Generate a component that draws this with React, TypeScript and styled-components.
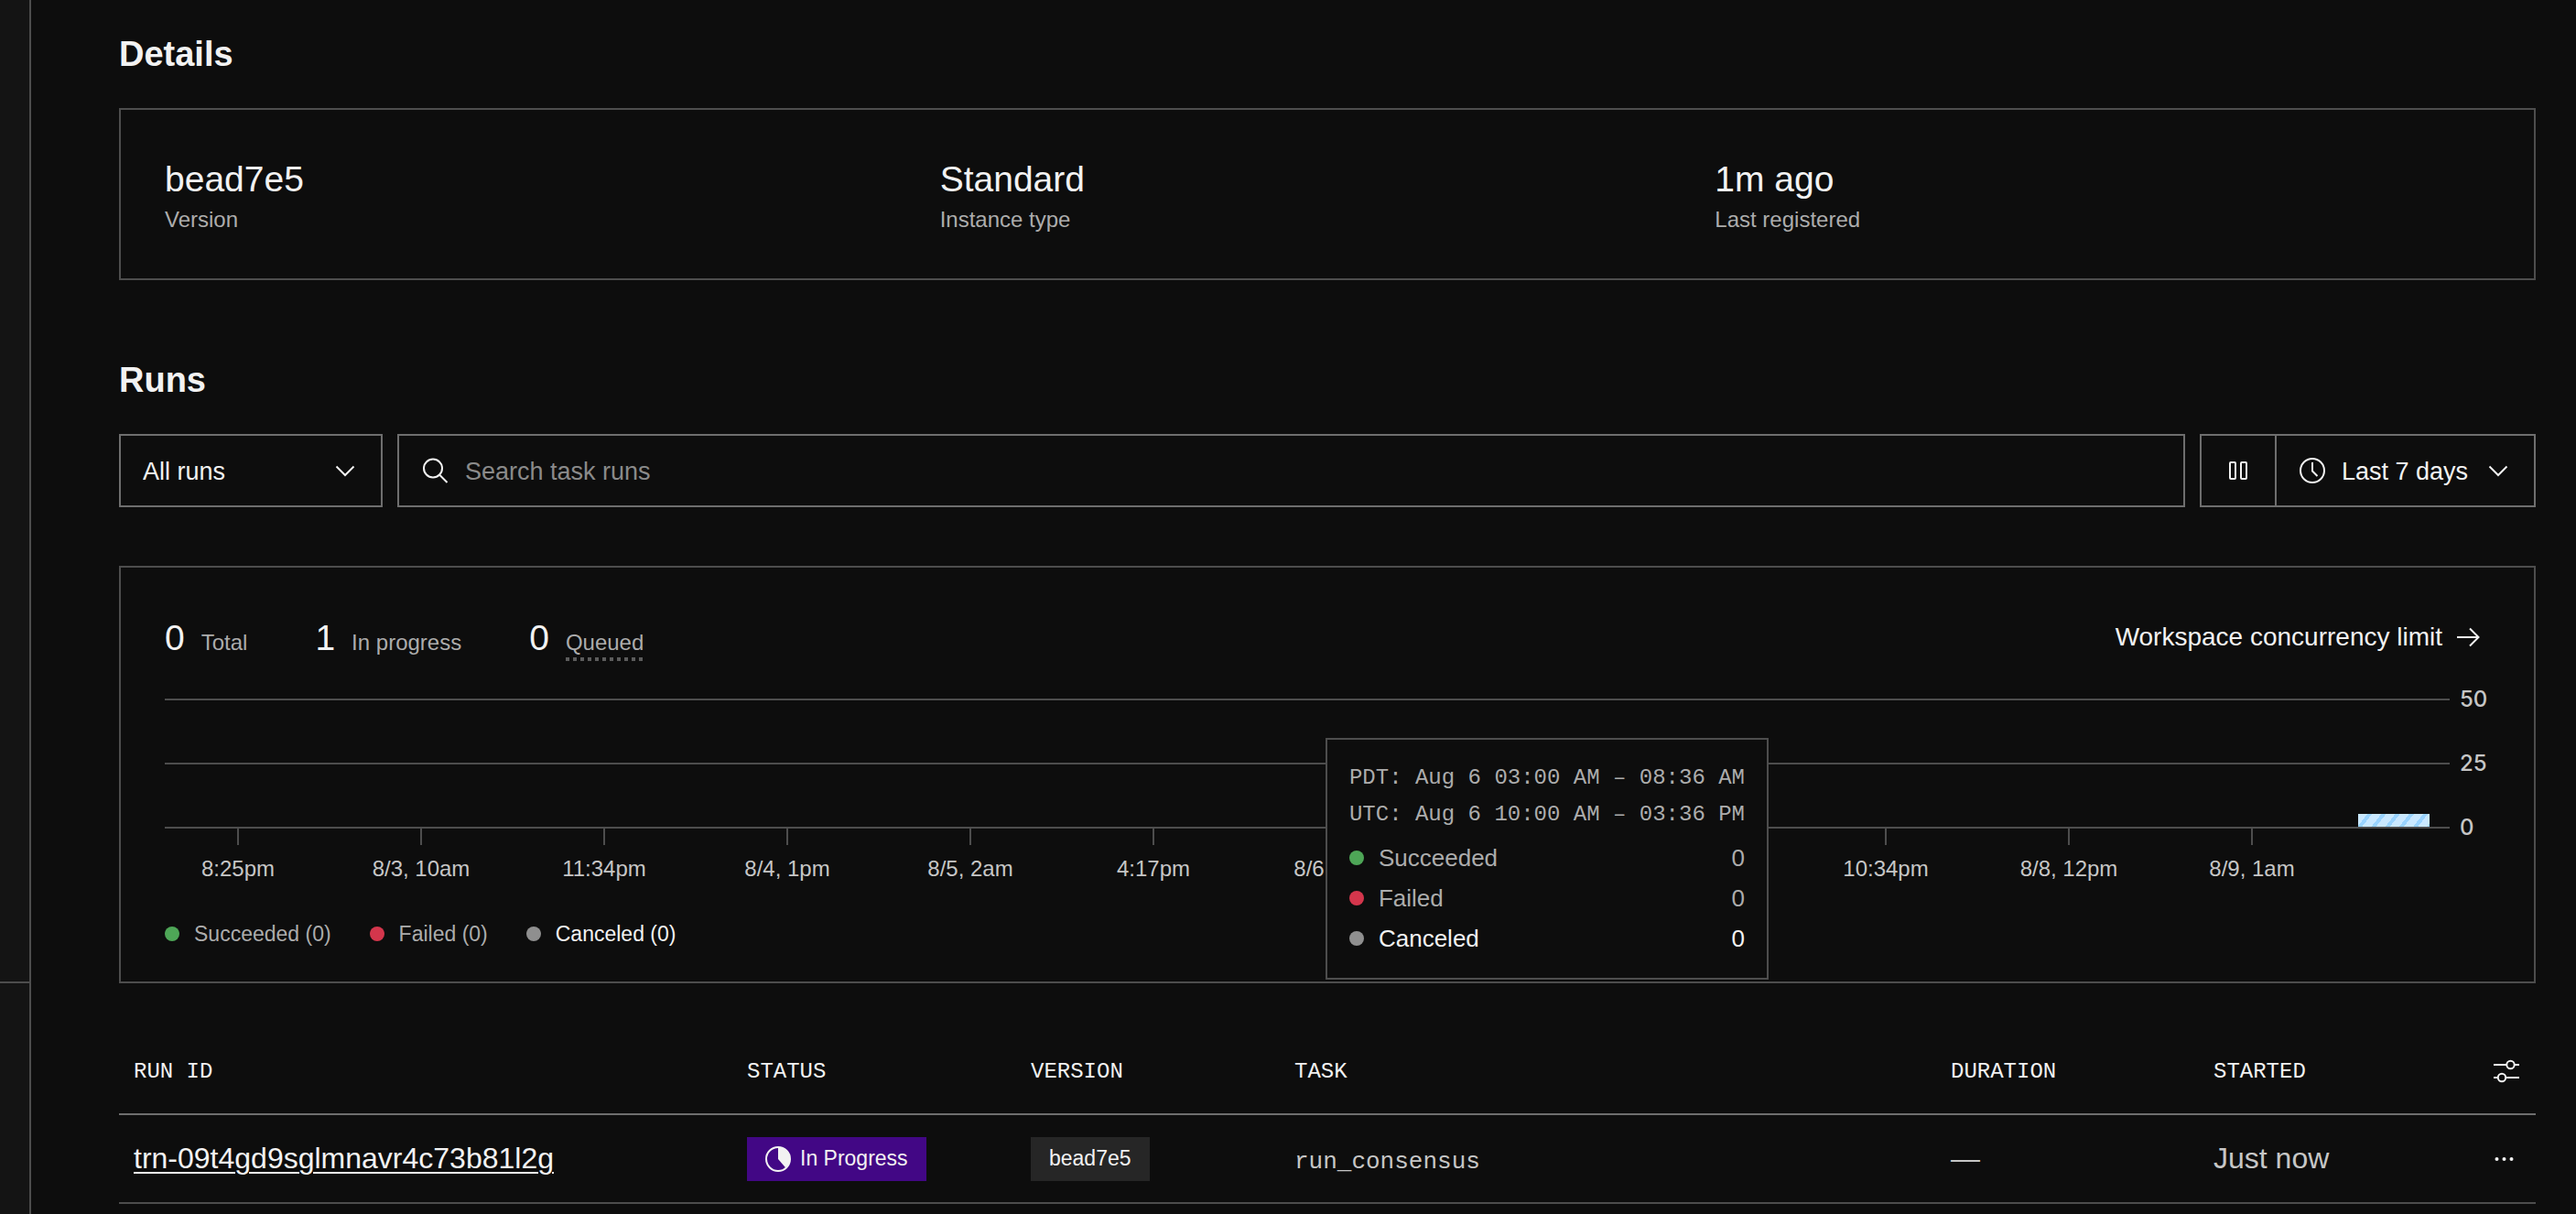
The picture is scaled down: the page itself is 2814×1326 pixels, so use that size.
import React from 'react';
import styled, { createGlobalStyle } from 'styled-components';

const color = {
  page: '#0d0d0d',
  rail: '#141414',
  line: '#4d4d4d',
  control: '#6e6e6e',
  text: '#f2f2f2',
  soft: '#c6c6c6',
  muted: '#acacac',
  placeholder: '#8a8a8a',
};

const sans = `'Liberation Sans', Arial, sans-serif`;
const mono = `'Liberation Mono', 'Courier New', monospace`;

const GlobalStyle = createGlobalStyle`
  *, *::before, *::after { box-sizing: border-box; }
  body { margin: 0; background: ${color.page}; color: ${color.text}; font-family: ${sans}; }
  h2, dl, dd, ul { margin: 0; padding: 0; }
  button, input, select { font: inherit; color: inherit; background: none; border: 0; border-radius: 0; padding: 0; margin: 0; }
  svg { display: block; flex: none; fill: none; stroke: currentColor; }
`;

const Page = styled.div`
  display: grid;
  grid-template-columns: 34px minmax(0, 1fr);
  min-height: 100vh;
`;

const Rail = styled.aside`
  display: flex;
  flex-direction: column;
  background: ${color.rail};
  border-right: 2px solid ${color.line};
`;

const RailBody = styled.div`
  flex: 1;
`;

const RailFooter = styled.div`
  height: 254px;
  border-top: 2px solid ${color.line};
`;

const Main = styled.main`
  padding: 35px 44px 0 96px;
`;

const Heading = styled.h2`
  margin-bottom: 35px;
  font-size: 38px;
  line-height: 48px;
  font-weight: 700;
`;

const Card = styled.section`
  border: 2px solid ${color.line};
`;

const DetailList = styled.dl`
  display: grid;
  grid-template-columns: repeat(3, 1fr);
  padding: 52px 48px 50px;
  margin-bottom: 85px;
  border: 2px solid ${color.line};
`;

const Detail = styled.div`
  display: flex;
  flex-direction: column-reverse;
  justify-content: flex-end;
  gap: 6px;
`;

const DetailLabel = styled.dt`
  font-size: 24px;
  line-height: 28px;
  color: ${color.muted};
`;

const DetailValue = styled.dd`
  font-size: 39px;
  line-height: 48px;
`;

const Toolbar = styled.div`
  display: grid;
  grid-template-columns: 288px minmax(0, 1fr) auto;
  gap: 16px;
  height: 80px;
  margin-bottom: 64px;
  font-size: 27px;
`;

const SelectBox = styled.div<{ $bare?: boolean }>`
  display: grid;
  align-items: center;
  border: ${p => (p.$bare ? '0' : `2px solid ${color.control}`)};
  > * { grid-area: 1 / 1; }
`;

const Select = styled.select<{ $indent: number }>`
  appearance: none;
  width: 100%;
  height: 100%;
  padding-top: 2px;
  padding-left: ${p => p.$indent}px;
  padding-right: 72px;
`;

const Adornment = styled.span<{ $end?: boolean }>`
  justify-self: ${p => (p.$end ? 'end' : 'start')};
  margin: 0 27px 0 25px;
  pointer-events: none;
`;

const SearchBox = styled.label`
  display: flex;
  align-items: center;
  gap: 18px;
  padding: 0 26px;
  border: 2px solid ${color.control};
`;

const SearchInput = styled.input`
  flex: 1;
  min-width: 0;
  height: 100%;
  padding-top: 2px;
  outline: none;
  &::placeholder { color: ${color.placeholder}; opacity: 1; }
`;

const RangeGroup = styled.div`
  display: grid;
  grid-template-columns: 82px 281px;
  border: 2px solid ${color.control};
`;

const PauseButton = styled.button`
  display: grid;
  place-items: center;
  border-right: 2px solid ${color.control};
`;

const ChartCard = styled(Card)`
  padding: 53px 48px 38px;
  margin-bottom: 48px;
`;

const ChartHeader = styled.div`
  display: flex;
  justify-content: space-between;
  align-items: flex-start;
  height: 48px;
  margin-bottom: 28px;
`;

const Stats = styled.dl`
  display: flex;
  gap: 74px;
`;

const Stat = styled.div`
  display: flex;
  flex-direction: row-reverse;
  align-items: baseline;
  gap: 18px;
  line-height: 48px;
`;

const StatValue = styled.dd`
  font-size: 39px;
`;

const StatLabel = styled.dt<{ $hint?: boolean }>`
  font-size: 24px;
  line-height: 28px;
  color: ${color.muted};
  padding-bottom: 6px;
  background: ${p =>
    p.$hint
      ? `repeating-linear-gradient(90deg, #5c5c5c 0 4px, transparent 4px 8px) left bottom / 100% 4px no-repeat`
      : 'none'};
`;

const LimitLink = styled.a`
  display: flex;
  align-items: center;
  gap: 14px;
  padding-right: 10px;
  font-size: 28px;
  line-height: 46px;
  color: ${color.text};
  text-decoration: none;
`;

const Chart = styled.div`
  display: grid;
  grid-template-columns: minmax(0, 1fr) 33px;
  column-gap: 11px;
  margin-bottom: 43px;
`;

const Plot = styled.div`
  position: relative;
  padding-top: 14px;
`;

const Band = styled.div`
  display: flex;
  align-items: flex-end;
  justify-content: flex-end;
  height: 70px;
  padding-right: 22px;
  border-top: 2px solid ${color.line};
`;

const Bar = styled.div`
  width: 78px;
  background: repeating-linear-gradient(128deg, #c9e8ff 0 8px, #99d3fe 8px 12px);
`;

const TimeAxis = styled.div`
  display: grid;
  grid-template-columns: repeat(12, 160fr) 96fr;
  column-gap: 40px;
  border-top: 2px solid ${color.line};
`;

const Tick = styled.span`
  display: flex;
  flex-direction: column;
  align-items: center;
  gap: 12px;
  font-size: 24px;
  line-height: 28px;
  color: ${color.soft};
  white-space: nowrap;
  &::before {
    content: '';
    width: 2px;
    height: 18px;
    background: ${color.line};
  }
`;

const ValueAxis = styled.div`
  display: flex;
  flex-direction: column;
  gap: 42px;
  padding-top: 1px;
  font-family: Inter, sans-serif;
  font-size: 24px;
  font-weight: 500;
  line-height: 28px;
  color: ${color.soft};
`;

const Tooltip = styled.div`
  position: absolute;
  top: 57px;
  left: 50.8%;
  padding: 22px 24px 21px;
  background: ${color.page};
  border: 2px solid ${color.line};
  color: ${color.muted};
`;

const TooltipTime = styled.div`
  font-family: ${mono};
  font-size: 24px;
  line-height: 40px;
  white-space: nowrap;
`;

const TooltipRows = styled.ul`
  margin-top: 5px;
  list-style: none;
`;

const TooltipRow = styled.li<{ $strong?: boolean }>`
  display: flex;
  align-items: center;
  justify-content: space-between;
  font-size: 26px;
  line-height: 44px;
  color: ${p => (p.$strong ? color.text : color.muted)};
`;

const Key = styled.span`
  display: flex;
  align-items: center;
  gap: 16px;
`;

const Dot = styled.i<{ $fill: string }>`
  width: 16px;
  height: 16px;
  border-radius: 50%;
  background: ${p => p.$fill};
`;

const Legend = styled.ul`
  display: flex;
  gap: 42px;
  list-style: none;
`;

const LegendItem = styled.li<{ $strong?: boolean }>`
  font-size: 23px;
  line-height: 28px;
  color: ${p => (p.$strong ? color.text : color.muted)};
`;

const Table = styled.table`
  width: 100%;
  table-layout: fixed;
  border-collapse: separate;
  border-spacing: 0;
`;

const Th = styled.th`
  height: 96px;
  padding: 2px 0 0 16px;
  border-bottom: 2px solid ${color.control};
  font-family: ${mono};
  font-size: 24px;
  font-weight: 400;
  text-align: left;
  text-transform: uppercase;
`;

const Td = styled.td`
  height: 97px;
  padding: 0 0 0 16px;
  border-bottom: 2px solid ${color.line};
  font-size: 32px;
  color: ${color.soft};
`;

const RunLink = styled.a`
  color: ${color.text};
  text-decoration: underline 2px;
  text-underline-offset: 4px;
`;

const TaskName = styled.span`
  font-family: ${mono};
  font-size: 26px;
`;

const Badge = styled.span<{ $fill: string }>`
  display: flex;
  align-items: center;
  gap: 10px;
  width: fit-content;
  height: 48px;
  padding: 0 20px;
  background: ${p => p.$fill};
  font-size: 23px;
  color: ${color.text};
`;

const IconButton = styled.button`
  display: block;
  color: ${color.text};
`;

const Chevron = () => (
  <svg width="24" height="24" viewBox="0 0 24 24" strokeWidth="2" aria-hidden="true">
    <path d="M2.500 7.500 12 17l9.500-9.500" />
  </svg>
);

const SearchIcon = () => (
  <svg width="28" height="28" viewBox="0 0 28 28" strokeWidth="2" aria-hidden="true">
    <circle cx="11" cy="11.500" r="10" />
    <path d="m18 18.500 8.500 8.500" />
  </svg>
);

const ClockIcon = () => (
  <svg width="28" height="28" viewBox="0 0 28 28" strokeWidth="2" aria-hidden="true">
    <circle cx="14" cy="14" r="13" />
    <path d="M14 5v9.500l5.500 5.500" />
  </svg>
);

const PauseIcon = () => (
  <svg width="20" height="20" viewBox="0 0 20 20" strokeWidth="2" aria-hidden="true">
    <rect x="1" y="1" width="6" height="18" rx="1" />
    <rect x="13" y="1" width="6" height="18" rx="1" />
  </svg>
);

const ArrowIcon = () => (
  <svg width="28" height="28" viewBox="0 0 28 28" strokeWidth="2" aria-hidden="true">
    <path d="M2 14h23M16 4.500 25.500 14 16 23.500" />
  </svg>
);

const SlidersIcon = () => (
  <svg width="28" height="26" viewBox="0 0 28 26" strokeWidth="2" aria-hidden="true">
    <path d="M0 6h14M23 6h5M0 20h5M14 20h14" />
    <circle cx="18.500" cy="6" r="4.200" />
    <circle cx="9" cy="20" r="4.200" />
  </svg>
);

const MoreIcon = () => (
  <svg width="24" height="8" viewBox="0 0 24 8" aria-hidden="true">
    <g fill="currentColor" stroke="none">
      <circle cx="3.500" cy="4" r="2" />
      <circle cx="11.500" cy="4" r="2" />
      <circle cx="19.500" cy="4" r="2" />
    </g>
  </svg>
);

const ProgressIcon = () => (
  <svg width="28" height="28" viewBox="0 0 28 28" strokeWidth="2" aria-hidden="true">
    <circle cx="14" cy="14" r="13" />
    <path d="M14 1a13 13 0 0 1 8.500 22.800L14 14z" fill="currentColor" stroke="none" />
  </svg>
);

const details = [
  { label: 'Version', value: 'bead7e5' },
  { label: 'Instance type', value: 'Standard' },
  { label: 'Last registered', value: '1m ago' },
];

const stats = [
  { label: 'Total', value: 0 },
  { label: 'In progress', value: 1 },
  { label: 'Queued', value: 0, hint: true },
];

const outcomes = [
  { label: 'Succeeded', count: 0, fill: '#4ea657' },
  { label: 'Failed', count: 0, fill: '#d4364c' },
  { label: 'Canceled', count: 0, fill: '#8f8f8f', strong: true },
];

const ticks = [
  '8:25pm', '8/3, 10am', '11:34pm', '8/4, 1pm', '8/5, 2am', '4:17pm',
  '8/6, 5am', '', '', '10:34pm', '8/8, 12pm', '8/9, 1am',
];

const columns = [
  { title: 'Run ID', width: 670 },
  { title: 'Status', width: 310 },
  { title: 'Version', width: 288 },
  { title: 'Task', width: 717 },
  { title: 'Duration', width: 287 },
  { title: 'Started', width: 306 },
];

const running = 5;
const plotHeight = 140;
const plotMax = 50;

export default function App() {
  return (
    <>
      <GlobalStyle />
      <Page>
        <Rail>
          <RailBody />
          <RailFooter />
        </Rail>
        <Main>
          <Heading>Details</Heading>
          <DetailList>
            {details.map(d => (
              <Detail key={d.label}>
                <DetailLabel>{d.label}</DetailLabel>
                <DetailValue>{d.value}</DetailValue>
              </Detail>
            ))}
          </DetailList>

          <Heading>Runs</Heading>
          <Toolbar>
            <SelectBox>
              <Select $indent={24} aria-label="Run filter">
                <option>All runs</option>
              </Select>
              <Adornment $end><Chevron /></Adornment>
            </SelectBox>
            <SearchBox>
              <SearchIcon />
              <SearchInput type="text" placeholder="Search task runs" aria-label="Search task runs" />
            </SearchBox>
            <RangeGroup>
              <PauseButton type="button" aria-label="Pause"><PauseIcon /></PauseButton>
              <SelectBox $bare>
                <Adornment><ClockIcon /></Adornment>
                <Select $indent={71} aria-label="Time range">
                  <option>Last 7 days</option>
                </Select>
                <Adornment $end><Chevron /></Adornment>
              </SelectBox>
            </RangeGroup>
          </Toolbar>

          <ChartCard>
            <ChartHeader>
              <Stats>
                {stats.map(s => (
                  <Stat key={s.label}>
                    <StatLabel $hint={s.hint}>{s.label}</StatLabel>
                    <StatValue>{s.value}</StatValue>
                  </Stat>
                ))}
              </Stats>
              <LimitLink href="#concurrency">
                Workspace concurrency limit
                <ArrowIcon />
              </LimitLink>
            </ChartHeader>

            <Chart>
              <Plot>
                <Band />
                <Band>
                  <Bar style={{ height: (running / plotMax) * plotHeight }} />
                </Band>
                <TimeAxis>
                  {ticks.map((t, i) => <Tick key={i}>{t}</Tick>)}
                </TimeAxis>
                <Tooltip role="tooltip">
                  <TooltipTime>PDT: Aug 6 03:00 AM – 08:36 AM</TooltipTime>
                  <TooltipTime>UTC: Aug 6 10:00 AM – 03:36 PM</TooltipTime>
                  <TooltipRows>
                    {outcomes.map(o => (
                      <TooltipRow key={o.label} $strong={o.strong}>
                        <Key><Dot $fill={o.fill} />{o.label}</Key>
                        <span>{o.count}</span>
                      </TooltipRow>
                    ))}
                  </TooltipRows>
                </Tooltip>
              </Plot>
              <ValueAxis>
                <span>50</span>
                <span>25</span>
                <span>0</span>
              </ValueAxis>
            </Chart>

            <Legend>
              {outcomes.map(o => (
                <LegendItem key={o.label} $strong={o.strong}>
                  <Key><Dot $fill={o.fill} />{`${o.label} (${o.count})`}</Key>
                </LegendItem>
              ))}
            </Legend>
          </ChartCard>

          <Table>
            <colgroup>
              {columns.map(c => <col key={c.title} width={c.width} />)}
              <col width={62} />
            </colgroup>
            <thead>
              <tr>
                {columns.map(c => <Th key={c.title} scope="col">{c.title}</Th>)}
                <Th scope="col">
                  <IconButton type="button" aria-label="Columns"><SlidersIcon /></IconButton>
                </Th>
              </tr>
            </thead>
            <tbody>
              <tr>
                <Td><RunLink href="#run">trn-09t4gd9sglmnavr4c73b81l2g</RunLink></Td>
                <Td><Badge $fill="#420785"><ProgressIcon />In Progress</Badge></Td>
                <Td><Badge $fill="#262626">bead7e5</Badge></Td>
                <Td><TaskName>run_consensus</TaskName></Td>
                <Td>—</Td>
                <Td>Just now</Td>
                <Td>
                  <IconButton type="button" aria-label="Run actions"><MoreIcon /></IconButton>
                </Td>
              </tr>
            </tbody>
          </Table>
        </Main>
      </Page>
    </>
  );
}
